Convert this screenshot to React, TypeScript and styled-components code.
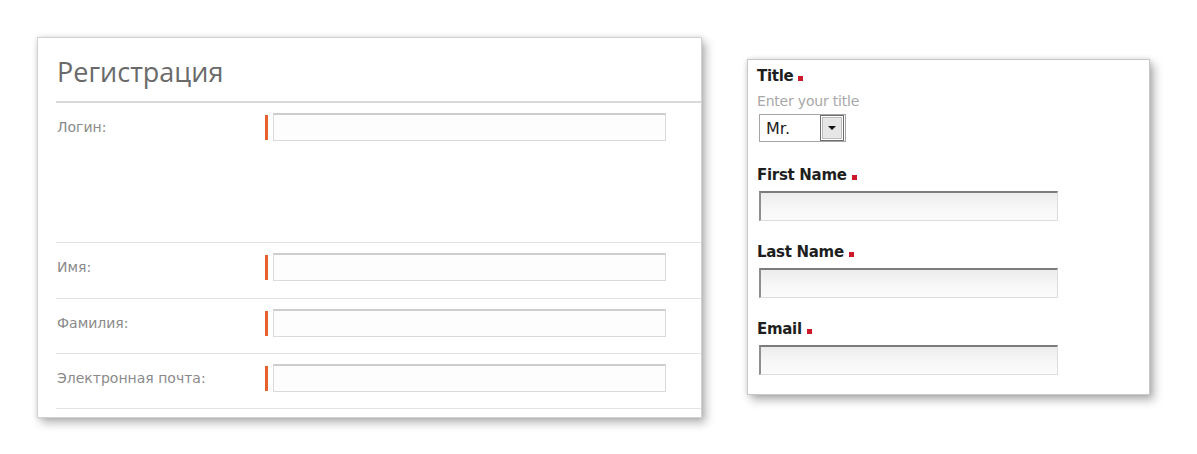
import React from "react";
import styled, { createGlobalStyle } from "styled-components";

const Global = createGlobalStyle`
  html, body { margin: 0; padding: 0; background: #ffffff; }
  body { font-family: "DejaVu Sans", "Liberation Sans", sans-serif; }
  * { box-sizing: border-box; }
`;

const Page = styled.div`
  display: flex;
  align-items: flex-start;
  gap: 45px;
  padding: 37px 0 0 37px;
  width: 1197px;
  height: 454px;
`;

const RegCard = styled.div`
  width: 665px;
  height: 381px;
  background: #ffffff;
  border: 1px solid #d2d2d2;
  box-shadow: 0 0 5px rgba(0, 0, 0, 0.12), 4px 5px 9px rgba(0, 0, 0, 0.28);
  padding-left: 18px;
  display: flex;
  flex-direction: column;
`;

const RegHeader = styled.div`
  height: 65px;
  padding: 18px 0 0 1px;
  border-bottom: 2px solid #d9d9d9;
`;

const RegTitle = styled.h1`
  margin: 0;
  font-family: "Open Sans", "Liberation Sans", sans-serif;
  font-weight: 400;
  font-size: 27px;
  line-height: 32px;
  color: #6a6a6a;
`;

const RegRow = styled.div<{ $h: number }>`
  height: ${(p) => p.$h}px;
  display: grid;
  grid-template-columns: 204px 3px 393px;
  column-gap: 5px;
  align-items: start;
  padding-top: 10px;
  border-bottom: 1px solid #e3e3e3;
`;

const RegLabel = styled.label`
  font-family: "DejaVu Sans", sans-serif;
  font-size: 14px;
  line-height: 28px;
  color: #8a8a8a;
  padding-left: 1px;
`;

const Marker = styled.span`
  display: block;
  width: 3px;
  height: 25px;
  margin-top: 2px;
  background: #e5622d;
`;

const RegInput = styled.input`
  display: block;
  width: 393px;
  height: 28px;
  border: 1px solid #dadada;
  border-top: 2px solid #cdcdcd;
  background: #fdfdfd;
  outline: none;
  padding: 0 6px;
`;

const FormCard = styled.div`
  margin-top: 22px;
  width: 403px;
  height: 336px;
  background: #ffffff;
  border: 1px solid #c8c8c8;
  box-shadow: 0 0 5px rgba(0, 0, 0, 0.12), 4px 5px 9px rgba(0, 0, 0, 0.3);
  padding: 7px 0 0 9px;
  display: flex;
  flex-direction: column;
  align-items: flex-start;
`;

const FieldLabel = styled.div<{ $gap?: number }>`
  margin-top: ${(p) => p.$gap ?? 0}px;
  font-family: "DejaVu Sans", sans-serif;
  font-weight: 700;
  font-size: 15px;
  line-height: 18px;
  letter-spacing: -0.3px;
  color: #1e1e1e;
  display: flex;
  align-items: baseline;
`;

const Required = styled.span`
  display: inline-block;
  width: 5px;
  height: 5px;
  margin-left: 5px;
  margin-bottom: 1px;
  background: #cc1a2a;
`;

const Hint = styled.div`
  margin-top: 7px;
  font-family: "DejaVu Sans", sans-serif;
  font-size: 14px;
  line-height: 18px;
  letter-spacing: -0.2px;
  color: #a8a8a8;
`;

const Select = styled.div`
  margin: 4px 0 0 2px;
  width: 87px;
  height: 28px;
  border: 1px solid #a6a6a6;
  display: flex;
  align-items: center;
  justify-content: space-between;
  padding: 0 1px 0 6px;
  background: #fff;
`;

const SelectValue = styled.span`
  font-family: "DejaVu Sans", sans-serif;
  font-size: 16px;
  color: #222;
`;

const DropButton = styled.span`
  width: 24px;
  height: 26px;
  border: 1px solid #6e6e6e;
  box-shadow: inset 0 0 0 1px #fff, inset 0 0 0 2px #bdbdbd;
  background: #e6e6e6;
  display: flex;
  flex-direction: column;
  align-items: center;
  justify-content: center;
  gap: 1px;
`;

const Arrow = styled.span`
  width: 0;
  height: 0;
  border-left: 4px solid transparent;
  border-right: 4px solid transparent;
  border-top: 4px solid #111;
`;

const TextField = styled.input`
  display: block;
  margin: 7px 0 0 2px;
  width: 299px;
  height: 30px;
  border: 1px solid #dcdcdc;
  border-top: 2px solid #7c7c7c;
  border-left: 2px solid #8e8e8e;
  background: linear-gradient(#ececec, #f7f7f7 55%, #fbfbfb);
  outline: none;
  padding: 0 5px;
`;

const regRows = [
  { label: "Логин:", h: 140 },
  { label: "Имя:", h: 56 },
  { label: "Фамилия:", h: 55 },
  { label: "Электронная почта:", h: 55 },
];

const fields = ["First Name", "Last Name", "Email"];

export default function App() {
  return (
    <>
      <Global />
      <Page>
        <RegCard>
          <RegHeader>
            <RegTitle>Регистрация</RegTitle>
          </RegHeader>
          {regRows.map((r) => (
            <RegRow key={r.label} $h={r.h}>
              <RegLabel>{r.label}</RegLabel>
              <Marker />
              <RegInput type="text" />
            </RegRow>
          ))}
        </RegCard>
        <FormCard>
          <FieldLabel>
            Title<Required />
          </FieldLabel>
          <Hint>Enter your title</Hint>
          <Select>
            <SelectValue>Mr.</SelectValue>
            <DropButton>
              <Arrow />
            </DropButton>
          </Select>
          {fields.map((f, i) => (
            <React.Fragment key={f}>
              <FieldLabel $gap={i === 0 ? 24 : 22}>
                {f}
                <Required />
              </FieldLabel>
              <TextField type="text" />
            </React.Fragment>
          ))}
        </FormCard>
      </Page>
    </>
  );
}
